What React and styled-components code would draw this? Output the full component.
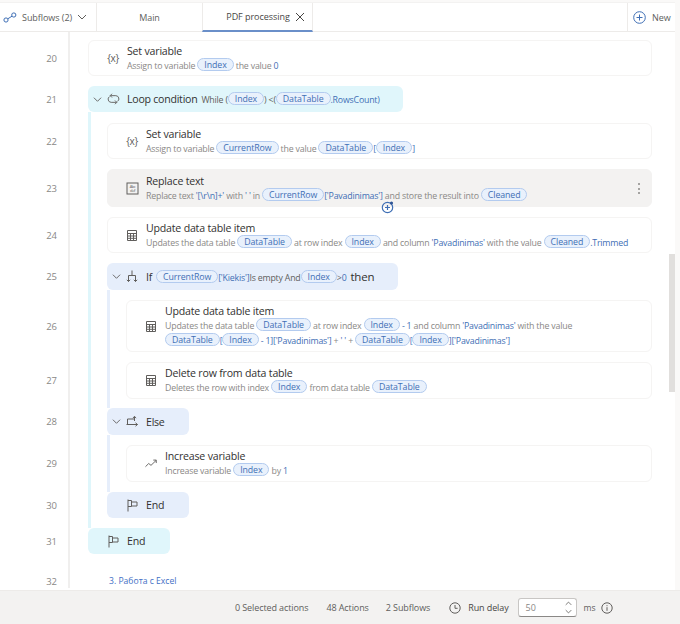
import styled, { createGlobalStyle } from "styled-components";

const GlobalStyle = createGlobalStyle`
  html, body {
    margin: 0;
    padding: 0;
    background: #fff;
  }
  body {
    font-family: "Open Sans", "Noto Sans", "Liberation Sans", sans-serif;
  }
`;

const Page = styled.div`
  position: relative;
  width: 680px;
  height: 624px;
  display: flex;
  flex-direction: column;
  overflow: hidden;
  background: #faf9f8;
`;

const Header = styled.div`
  display: flex;
  height: 30px;
  flex: none;
  margin-top: 2px;
  margin-right: 5px;
  background: #fff;
  border-top: 1px solid #f3f2f1;
  border-bottom: 1px solid #edebe9;
  font-size: 9px;
  letter-spacing: -0.05px;
  color: #605e5c;
  box-sizing: border-box;
`;

const SubflowBox = styled.div`
  width: 97px;
  display: flex;
  align-items: center;
  padding-left: 3px;
  box-sizing: border-box;
  border-right: 1px solid #edebe9;
  white-space: nowrap;
  & > span {
    margin: 0 5px 0 5px;
  }
`;

const Tab = styled.div`
  display: flex;
  align-items: center;
  justify-content: center;
  gap: 5px;
  width: ${(p) => p.$width}px;
  box-sizing: border-box;
  ${(p) =>
    p.$active &&
    `
    padding-left: 16px;
    border-left: 1px solid #edebe9;
    border-right: 1px solid #edebe9;
    border-bottom: 2px solid #6a8fc9;
    margin-bottom: -1px;
    color: #484644;
  `}
`;

const Spacer = styled.div`
  flex: 1;
`;

const NewButton = styled.div`
  width: 48px;
  display: flex;
  align-items: center;
  gap: 6px;
  padding-left: 5px;
  box-sizing: border-box;
  border-left: 1px solid #edebe9;
`;

const Main = styled.div`
  flex: 1;
  min-height: 0;
  overflow: hidden;
  margin-right: 5px;
  background: #fff;
`;

const Row = styled.div`
  display: flex;
  align-items: stretch;
`;

const LineNo = styled.div`
  width: 70px;
  flex: none;
  box-sizing: border-box;
  padding-top: ${(p) => p.$gap}px;
  padding-right: 11px;
  border-right: 2px solid #f0efee;
  display: flex;
  align-items: center;
  justify-content: flex-end;
  font-size: 9.5px;
  color: #8a8886;
`;

const Lead = styled.div`
  width: 18px;
  flex: none;
`;

const Rail = styled.div`
  width: 19px;
  flex: none;
  box-sizing: border-box;
  border-left: 3px solid ${(p) => (p.$blue ? "#e6eefb" : "#dff6fb")};
  ${(p) => p.$stub && `width: 3px; margin-right: -3px; height: ${p.$gap}px;`}
`;

const Slot = styled.div`
  flex: 1;
  min-width: 0;
  padding-top: ${(p) => p.$gap}px;
  padding-right: 23px;
`;

const Card = styled.div`
  position: relative;
  height: ${(p) => p.$height}px;
  box-sizing: border-box;
  display: flex;
  align-items: center;
  border-radius: 6px;
  border: 1px solid ${(p) => (p.$selected ? "#f3f2f1" : "#f5f4f3")};
  background: ${(p) => (p.$selected ? "#f3f2f1" : "#fff")};
`;

const IconWell = styled.div`
  width: 38px;
  flex: none;
  box-sizing: border-box;
  padding-left: 10px;
  display: flex;
  justify-content: center;
  align-items: center;
  color: #605e5c;
  font-size: 10px;
  letter-spacing: -0.4px;
`;

const CardText = styled.div`
  min-width: 0;
  padding-top: 1px;
`;

const Title = styled.div`
  font-size: 10.6px;
  line-height: 13px;
  letter-spacing: -0.2px;
  color: #323130;
`;

const Desc = styled.div`
  font-size: 8.8px;
  line-height: 15px;
  height: 15px;
  white-space: nowrap;
  color: #8a8886;
  letter-spacing: -0.2px;
`;

const Token = styled.span`
  display: inline-block;
  height: 13px;
  line-height: 12px;
  padding: 0 6px;
  box-sizing: border-box;
  border: 1px solid #b3cbef;
  border-radius: 7px;
  background: #e9f1fc;
  color: #3f6fb5;
  font-size: 8.8px;
  vertical-align: 1px;
  letter-spacing: -0.1px;
`;

const Val = styled.span`
  color: #3f6fb5;
`;

const Block = styled.div`
  height: ${(p) => p.$height}px;
  width: ${(p) => p.$width}px;
  box-sizing: border-box;
  display: flex;
  align-items: center;
  border-radius: 6px;
  background: ${(p) => (p.$loop ? "#e0f6fb" : "#e6eefb")};
  white-space: nowrap;
`;

const Chevron = styled.div`
  width: 18px;
  flex: none;
  display: flex;
  justify-content: center;
  color: #605e5c;
`;

const BlockIcon = styled.div`
  width: 14px;
  flex: none;
  margin-right: 6px;
  display: flex;
  justify-content: center;
  color: #605e5c;
`;

const BlockTitle = styled.span`
  font-size: ${(p) => (p.$large ? 11.5 : 10.6)}px;
  font-weight: 500;
  letter-spacing: -0.25px;
  color: #323130;
  margin: 0 4px 0 ${(p) => (p.$large ? 4 : 1)}px;
`;

const BlockDesc = styled.span`
  font-size: 8.8px;
  color: #605e5c;
  letter-spacing: -0.2px;
`;

const Comment = styled.div`
  padding-left: 21px;
  font-size: 8.6px;
  line-height: 12px;
  color: #3f6fc5;
`;

const Kebab = styled.div`
  position: absolute;
  right: 11px;
  top: 13px;
  width: 2px;
  height: 11px;
  display: flex;
  flex-direction: column;
  justify-content: space-between;
  & > i {
    display: block;
    width: 2px;
    height: 2px;
    border-radius: 50%;
    background: #8a8886;
  }
`;

const InsertButton = styled.div`
  position: absolute;
  left: 273px;
  top: 30px;
  width: 14px;
  height: 14px;
  color: #3f6fb5;
`;

const Thumb = styled.div`
  position: absolute;
  left: 669px;
  top: 254px;
  width: 6px;
  height: 138px;
  background: #e1dfdd;
`;

const Footer = styled.div`
  height: 34px;
  flex: none;
  display: flex;
  align-items: center;
  background: #f3f2f1;
  border-top: 1px solid #edebe9;
  box-sizing: border-box;
  padding-left: 235px;
  font-size: 9px;
  letter-spacing: -0.1px;
  color: #605e5c;
`;

const Stat = styled.span`
  margin-right: ${(p) => p.$gap}px;
  white-space: nowrap;
`;

const DelayLabel = styled.span`
  font-weight: 500;
  color: #484644;
  margin: 0 9px 0 7px;
  white-space: nowrap;
`;

const DelayInput = styled.div`
  width: 59px;
  height: 19px;
  box-sizing: border-box;
  display: flex;
  align-items: center;
  justify-content: space-between;
  padding: 0 0 0 7px;
  background: #fff;
  border: 1px solid #c8c6c4;
  border-bottom-color: #8a8886;
  border-radius: 3px;
  color: #8a8886;
`;

const Spin = styled.div`
  display: flex;
  flex-direction: column;
  gap: 1px;
  margin-right: 4px;
  color: #484644;
`;

const Ms = styled.span`
  margin: 0 6px 0 7px;
  font-size: 8.6px;
`;

const Stroke = styled.svg`
  display: block;
  flex: none;
  fill: none;
  stroke: currentColor;
  stroke-width: 1;
  color: ${(p) => p.$color || "currentColor"};
`;

const ChevronIcon = ({ size = 9, up }) => (
  <Stroke width={size} height={size} viewBox="0 0 10 10">
    <path d={up ? "M1 7l4-4 4 4" : "M1 3l4 4 4-4"} />
  </Stroke>
);

const TableIcon = () => (
  <Stroke width="12" height="11" viewBox="0 0 12 11">
    <path d="M1.5.5h9v10h-9zM1.5 3.5h9M1.5 6h9M1.5 8.3h9M4.5 3.5v7M7.5 3.5v7" />
  </Stroke>
);

const ReplaceIcon = () => (
  <Stroke width="13" height="13" viewBox="0 0 13 13">
    <rect x="1" y="1" width="11" height="11" />
    <text
      x="6.5"
      y="5.6"
      textAnchor="middle"
      fontSize="4"
      fill="#605e5c"
      stroke="none"
    >
      Abc
    </text>
    <text
      x="6.5"
      y="10"
      textAnchor="middle"
      fontSize="4"
      fill="#605e5c"
      stroke="none"
    >
      def
    </text>
  </Stroke>
);

const LoopIcon = () => (
  <Stroke width="13" height="12" viewBox="0 0 14 12">
    <path d="M3.5 2.4h6a3.4 3.4 0 0 1 1.8 6.2M10.5 9.6h-6a3.4 3.4 0 0 1-1.8-6.2" />
    <path d="M5.4.4L3.4 2.4l2 2M8.6 7.6l2 2-2 2" />
  </Stroke>
);

const IfIcon = () => (
  <Stroke width="12" height="13" viewBox="0 0 12 13">
    <path d="M6 .5v5M2.5 5.5h7M2.5 5.5v6M9.5 5.5v6M.8 9.8l1.7 1.7 1.7-1.7M7.8 9.8l1.7 1.7 1.7-1.7" />
  </Stroke>
);

const ElseIcon = () => (
  <Stroke width="12" height="11" viewBox="0 0 12 11">
    <path d="M1.5 8.5V3h7v2M.5 8.5h11M8.5.5v4M6.8 2l1.7-1.5L10.2 2M9.5 6.8l2 1.7-2 1.7" />
  </Stroke>
);

const FlagIcon = () => (
  <Stroke width="11" height="13" viewBox="0 0 11 13">
    <path d="M1 .5v12M1 1.5h3.5v6H1M4.5 3h5.5v4H4.5" />
  </Stroke>
);

const TrendIcon = () => (
  <Stroke width="12" height="9" viewBox="0 0 13 9">
    <path d="M.5 8l3.5-3.5 2.5 2L12 1.2M9 .8h3.2V4" />
  </Stroke>
);

const PlusCircle = () => (
  <Stroke width="13" height="13" viewBox="0 0 13 13" $color="#3f6fb5">
    <circle cx="6.5" cy="6.5" r="5.8" />
    <path d="M6.5 3.5v6M3.5 6.5h6" />
  </Stroke>
);

const InsertIcon = () => (
  <Stroke width="14" height="14" viewBox="0 0 14 14" $color="#3f6fb5">
    <circle cx="6.5" cy="7.5" r="5.2" strokeWidth="1.2" />
    <path d="M6.5 5v5M4 7.5h5" strokeWidth="1.2" />
    <circle cx="10.5" cy="3" r="1.6" fill="#2f5596" stroke="none" />
  </Stroke>
);

const FlowRow = ({ no, gap = 10, rails = [], stub, children }) => (
  <Row>
    <LineNo $gap={gap}>{no}</LineNo>
    <Lead />
    {rails.map((blue, i) => (
      <Rail key={i} $blue={blue} />
    ))}
    {stub !== undefined && <Rail $blue={stub} $stub $gap={gap} />}
    <Slot $gap={gap}>{children}</Slot>
  </Row>
);

const Action = ({ icon, title, height = 37, selected, children, extra }) => (
  <Card $height={height} $selected={selected}>
    <IconWell>{icon}</IconWell>
    <CardText>
      <Title>{title}</Title>
      {children}
    </CardText>
    {extra}
  </Card>
);

const App = () => (
  <>
    <GlobalStyle />
    <Page>
      <Header>
        <SubflowBox>
          <Stroke width="14" height="11" viewBox="0 0 14 11" $color="#3f6fb5">
            <circle cx="3" cy="8" r="2.1" />
            <circle cx="10.8" cy="3" r="2.1" />
            <path d="M4.8 6.8L9 4.2" />
          </Stroke>
          <span>Subflows (2)</span>
          <ChevronIcon size={10} />
        </SubflowBox>
        <Tab $width={105}>Main</Tab>
        <Tab $width={111} $active>
          PDF processing
          <Stroke width="10" height="10" viewBox="0 0 10 10">
            <path d="M1 1l8 8M9 1l-8 8" />
          </Stroke>
        </Tab>
        <Spacer />
        <NewButton>
          <PlusCircle />
          New
        </NewButton>
      </Header>

      <Main>
        <FlowRow no="20" gap={8}>
          <Action icon="{x}" title="Set variable" height={36}>
            <Desc>
              Assign to variable <Token>Index</Token> the value <Val>0</Val>
            </Desc>
          </Action>
        </FlowRow>

        <FlowRow no="21">
          <Block $loop $height={26} $width={315}>
            <Chevron>
              <ChevronIcon />
            </Chevron>
            <BlockIcon>
              <LoopIcon />
            </BlockIcon>
            <BlockTitle>Loop condition</BlockTitle>
            <BlockDesc>
              While (<Token>Index</Token>) &lt;(<Token>DataTable</Token>
              <Val>.RowsCount)</Val>
            </BlockDesc>
          </Block>
        </FlowRow>

        <FlowRow no="22" gap={11} rails={[false]}>
          <Action icon="{x}" title="Set variable" height={36}>
            <Desc>
              Assign to variable <Token>CurrentRow</Token> the value{" "}
              <Token>DataTable</Token>
              <Val>[</Val>
              <Token>Index</Token>
              <Val>]</Val>
            </Desc>
          </Action>
        </FlowRow>

        <FlowRow no="23" rails={[false]}>
          <Action
            icon={<ReplaceIcon />}
            title="Replace text"
            height={38}
            selected
            extra={
              <>
                <Kebab>
                  <i />
                  <i />
                  <i />
                </Kebab>
                <InsertButton>
                  <InsertIcon />
                </InsertButton>
              </>
            }
          >
            <Desc>
              Replace text <Val>'[\r\n]+'</Val> with <Val>'&nbsp;'</Val> in{" "}
              <Token>CurrentRow</Token>
              <Val>['Pavadinimas']</Val> and store the result into{" "}
              <Token>Cleaned</Token>
            </Desc>
          </Action>
        </FlowRow>

        <FlowRow no="24" rails={[false]}>
          <Action icon={<TableIcon />} title="Update data table item" height={36}>
            <Desc>
              Updates the data table <Token>DataTable</Token> at row index{" "}
              <Token>Index</Token> and column <Val>'Pavadinimas'</Val> with the
              value <Token>Cleaned</Token>
              <Val>.Trimmed</Val>
            </Desc>
          </Action>
        </FlowRow>

        <FlowRow no="25" rails={[false]}>
          <Block $height={27} $width={291}>
            <Chevron>
              <ChevronIcon />
            </Chevron>
            <BlockIcon>
              <IfIcon />
            </BlockIcon>
            <BlockTitle>If</BlockTitle>
            <BlockDesc>
              <Token>CurrentRow</Token>
              <Val>['Kiekis']</Val>Is empty And<Token>Index</Token>&gt;
              <Val>0</Val>
            </BlockDesc>
            <BlockTitle $large>then</BlockTitle>
          </Block>
        </FlowRow>

        <FlowRow no="26" rails={[false, true]}>
          <Action icon={<TableIcon />} title="Update data table item" height={52}>
            <Desc>
              Updates the data table <Token>DataTable</Token> at row index{" "}
              <Token>Index</Token> <Val>- 1</Val> and column{" "}
              <Val>'Pavadinimas'</Val> with the value
            </Desc>
            <Desc>
              <Token>DataTable</Token>
              <Val>[</Val>
              <Token>Index</Token> <Val>- 1]['Pavadinimas']</Val> + <Val>'&nbsp;'</Val> +{" "}
              <Token>DataTable</Token>
              <Val>[</Val>
              <Token>Index</Token>
              <Val>]['Pavadinimas']</Val>
            </Desc>
          </Action>
        </FlowRow>

        <FlowRow no="27" rails={[false, true]}>
          <Action icon={<TableIcon />} title="Delete row from data table">
            <Desc>
              Deletes the row with index <Token>Index</Token> from data table{" "}
              <Token>DataTable</Token>
            </Desc>
          </Action>
        </FlowRow>

        <FlowRow no="28" gap={9} rails={[false]} stub={true}>
          <Block $height={27} $width={82}>
            <Chevron>
              <ChevronIcon />
            </Chevron>
            <BlockIcon>
              <ElseIcon />
            </BlockIcon>
            <BlockTitle>Else</BlockTitle>
          </Block>
        </FlowRow>

        <FlowRow no="29" rails={[false, true]}>
          <Action icon={<TrendIcon />} title="Increase variable">
            <Desc>
              Increase variable <Token>Index</Token> by <Val>1</Val>
            </Desc>
          </Action>
        </FlowRow>

        <FlowRow no="30" rails={[false]} stub={true}>
          <Block $height={26} $width={82}>
            <Lead />
            <BlockIcon>
              <FlagIcon />
            </BlockIcon>
            <BlockTitle>End</BlockTitle>
          </Block>
        </FlowRow>

        <FlowRow no="31" stub={false}>
          <Block $loop $height={26} $width={82}>
            <Lead />
            <BlockIcon>
              <FlagIcon />
            </BlockIcon>
            <BlockTitle>End</BlockTitle>
          </Block>
        </FlowRow>

        <FlowRow no="32" gap={21}>
          <Comment>3. Работа с Excel</Comment>
        </FlowRow>
      </Main>

      <Thumb />

      <Footer>
        <Stat $gap={18}>0 Selected actions</Stat>
        <Stat $gap={17}>48 Actions</Stat>
        <Stat $gap={19}>2 Subflows</Stat>
        <Stroke width="12" height="12" viewBox="0 0 12 12">
          <circle cx="6" cy="6" r="5.2" />
          <path d="M6 3v3.3h2.6" />
        </Stroke>
        <DelayLabel>Run delay</DelayLabel>
        <DelayInput>
          50
          <Spin>
            <ChevronIcon size={7} up />
            <ChevronIcon size={7} />
          </Spin>
        </DelayInput>
        <Ms>ms</Ms>
        <Stroke width="12" height="12" viewBox="0 0 12 12">
          <circle cx="6" cy="6" r="5.2" />
          <path d="M6 5.2v3.6M6 3.2v1" />
        </Stroke>
      </Footer>
    </Page>
  </>
);

export default App;
